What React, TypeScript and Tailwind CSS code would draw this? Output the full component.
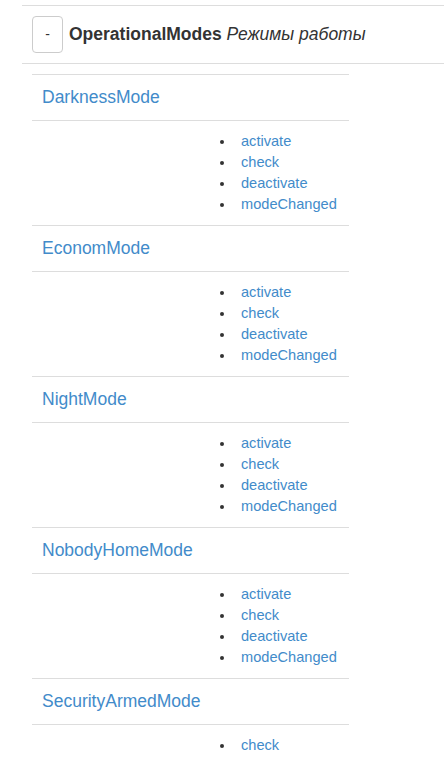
import React from 'react';

const modes = [
  { name: 'DarknessMode', methods: ['activate', 'check', 'deactivate', 'modeChanged'] },
  { name: 'EconomMode', methods: ['activate', 'check', 'deactivate', 'modeChanged'] },
  { name: 'NightMode', methods: ['activate', 'check', 'deactivate', 'modeChanged'] },
  { name: 'NobodyHomeMode', methods: ['activate', 'check', 'deactivate', 'modeChanged'] },
  { name: 'SecurityArmedMode', methods: ['check'] },
];

const App: React.FC = () => {
  return (
    <div className="min-h-screen bg-white pt-[5px] font-['Liberation_Sans',Arial,sans-serif] text-[#333]">
      <div className="ml-[22px]">
        {/* group header */}
        <div className="flex items-center gap-[6px] border-y border-[#ddd] pl-[10px] py-[10px]">
          <button className="flex h-[37px] w-[31px] items-center justify-center rounded-[4px] border border-[#ccc] bg-white text-[14px] text-[#333]">
            -
          </button>
          <h4 className="text-[17.5px] leading-[25px]">
            <span className="font-bold">OperationalModes</span> <i>Режимы работы</i>
          </h4>
        </div>

        {/* modes table */}
        <div className="ml-[10px] mt-[10px] w-[317px]">
          {modes.map((mode) => (
            <div key={mode.name}>
              <div className="border-t border-[#ddd] px-[10px] py-[10px]">
                <a href="#" className="text-[17.5px] leading-[25px] text-[#428bca]">
                  {mode.name}
                </a>
              </div>
              <div className="grid grid-cols-[161px_1fr] border-t border-[#ddd] py-[10px]">
                <div />
                <ul className="pl-[24px] text-[14.6px] leading-[21px]">
                  {mode.methods.map((m) => (
                    <li key={m} className="flex items-center">
                      <span className="w-[24px] shrink-0">
                        <span className="ml-[3px] block h-[4px] w-[4px] rounded-full bg-[#333]" />
                      </span>
                      <a href="#" className="text-[#428bca]">{m}</a>
                    </li>
                  ))}
                </ul>
              </div>
            </div>
          ))}
        </div>
      </div>
    </div>
  );
};

export default App;
